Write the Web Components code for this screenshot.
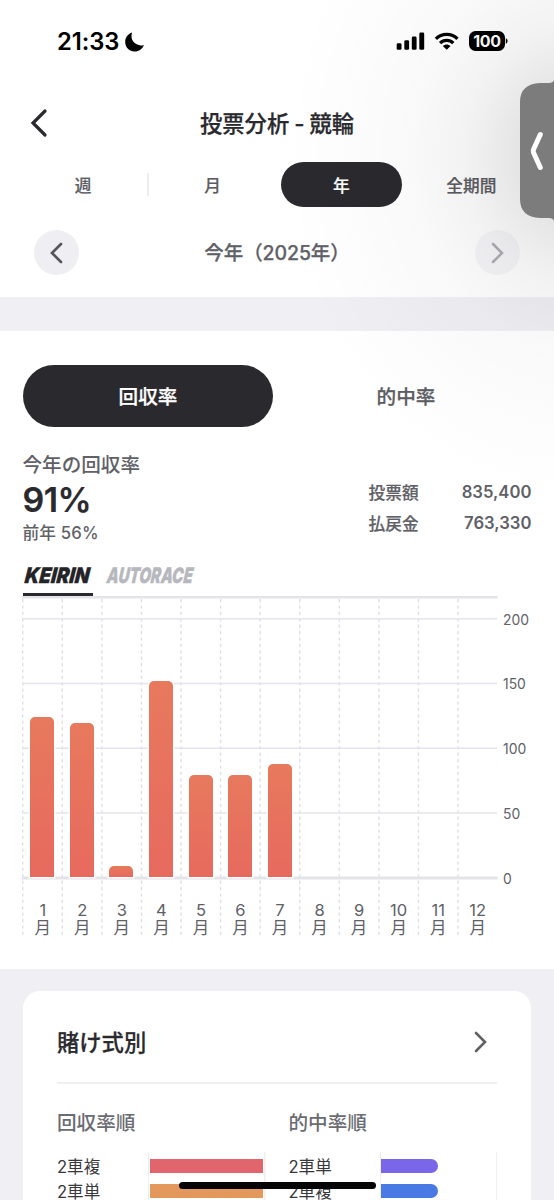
<!DOCTYPE html>
<html lang="ja">
<head>
<meta charset="utf-8">
<title>投票分析</title>
<style>
html,body{margin:0;padding:0;background:#fff}
body{width:554px;height:1200px;overflow:hidden;font-family:Inter,"Noto Sans CJK JP",sans-serif;color:#2a2a2e;-webkit-font-smoothing:antialiased}
</style>
</head>
<body>
<analysis-screen></analysis-screen>
<script>
const define=(name,html)=>customElements.define(name,class extends HTMLElement{
  connectedCallback(){
    if(this.shadowRoot)return;
    const t=document.createElement('template');
    t.innerHTML=typeof html==='function'?html(this):html;
    this.attachShadow({mode:'open'}).appendChild(t.content.cloneNode(true));
  }
});

define('status-bar',`<style>
:host{display:flex;box-sizing:border-box;height:82px;padding:0 46px 0 57px;align-items:center;color:#000}
.time{font-size:23.800px;font-weight:600;letter-spacing:-.1px;line-height:30px;width:67px;white-space:nowrap;padding-top:1px}
.moon{margin-top:1px}
.right{margin-left:auto;display:flex;align-items:center}
.bat{display:flex;align-items:center;justify-content:center;width:36px;height:20px;border-radius:6.5px;background:#000;color:#fff;font-size:16px;font-weight:700;letter-spacing:-.3px;line-height:20px}
</style>
<span class="time">21:33</span>
<svg class="moon" width="21" height="20" viewBox="0 0 21 20"><path d="M8 .6C4 2 1.200 5.500 1.200 9.900C1.200 15.300 5.400 19.400 10.700 19.400C15 19.400 18.500 16.900 19.900 12.900C13.500 15.200 5.300 9.500 8 .6Z"/></svg>
<div class="right">
<svg width="29" height="20" viewBox="0 0 29 20"><rect x=".7" y="12.300" width="4.800" height="6.500" rx="1.300"/><rect x="8.300" y="9.300" width="4.800" height="9.500" rx="1.300"/><rect x="15.800" y="5.600" width="4.800" height="13.200" rx="1.300"/><rect x="23.300" y="1.600" width="4.900" height="17.200" rx="1.300"/></svg>
<svg style="margin:0 10px 0 9px" width="25" height="20" viewBox="0 0 25 20"><g fill="none" stroke="#000" stroke-width="3.200"><path d="M1.900 7.900C7.700 1.900 17.700 1.900 23.500 7.900"/><path d="M6.100 12.100C9.700 8.400 15.700 8.400 19.300 12.100"/></g><path d="M8.800 15C11 12.900 14.400 12.900 16.600 15L12.700 18.800Z"/></svg>
<div class="bat">100</div>
<svg width="3" height="8" viewBox="0 0 3 8"><path d="M.8 1Q4.500 4 .8 7Z"/></svg>
</div>`);

define('ui-chevron',el=>{
  const s=+el.getAttribute('size'),w=el.getAttribute('weight'),d=el.getAttribute('dir');
  return `<style>:host{display:block;line-height:0}</style><svg width="${s/2+6}" height="${s+6}" fill="none" stroke="currentColor" stroke-width="${w}" stroke-linecap="round"><path d="${d==='left'?`M${s/2+3} 3L3 ${s/2+3}L${s/2+3} ${s+3}`:`M3 3L${s/2+3} ${s/2+3}L3 ${s+3}`}"/></svg>`});

define('nav-bar',`<style>
:host{display:grid;grid-template-columns:84px 1fr 84px;height:80px;align-items:center;color:#2a2a2e}
ui-chevron{margin-left:30px;margin-top:1px}
.t{text-align:center;font-size:22.3px;font-weight:500;-webkit-text-stroke:.25px;line-height:32px;padding-top:3px;white-space:nowrap;word-spacing:-1px}
</style><ui-chevron dir="left" size="24" weight="3.2"></ui-chevron><div class="t"><slot></slot></div>`);

define('period-tabs',`<style>
:host{display:grid;grid-template-columns:repeat(4,1fr);height:45px;padding:0 18px 0 18.500px}
div{display:flex;align-items:center;justify-content:center;font-size:16.700px;font-weight:500;-webkit-text-stroke:.2px;color:#5c5d63;margin:0 4px;border-radius:23px;position:relative}
.sep::after{content:"";position:absolute;right:-5px;top:11px;width:2px;height:23px;background:#ededf0}
.on{background:#2a2a2e;color:#fff;margin-right:5px}
</style><div class="sep">週</div><div>月</div><div class="on">年</div><div>全期間</div>`);

define('round-button',`<style>
:host{display:flex;width:45px;height:45px;border-radius:50%;background:#efeff3;align-items:center;justify-content:center;color:#55565b}
:host([disabled]){color:#adaeb2;background:#f6f6f9}
</style><slot></slot>`);

define('period-picker',`<style>
:host{display:flex;height:45px;margin:23px 34px 22px;align-items:center;justify-content:space-between}
.t{font-size:19.500px;font-weight:500;-webkit-text-stroke:.25px;color:#606167;line-height:30px;white-space:nowrap;letter-spacing:-.1px;padding-top:1px}
</style><round-button><ui-chevron dir="left" size="18" weight="2.7"></ui-chevron></round-button><div class="t"><slot></slot></div><round-button disabled><ui-chevron dir="right" size="18" weight="2.5"></ui-chevron></round-button>`);

define('rate-switch',`<style>
:host{display:grid;grid-template-columns:250px 1fr;column-gap:8px;height:62px;margin:34px 23px 0 23px}
div{display:flex;align-items:center;justify-content:center;border-radius:31px;font-size:19.600px;font-weight:500;-webkit-text-stroke:.25px;color:#5c5d63;box-sizing:border-box;padding-bottom:1px}
.on{background:#2a2a2e;color:#fff}
</style><div class="on">回収率</div><div>的中率</div>`);

define('rate-summary',`<style>
:host{display:flex;justify-content:space-between;margin:24px 22.500px 0 22.500px;height:100px;color:#606167;white-space:nowrap}
.a{font-size:19.600px;line-height:28px;font-weight:500}
.b{font-size:34px;line-height:42px;font-weight:600;color:#2a2a2e;letter-spacing:-.6px;-webkit-text-stroke:.2px}
.c{font-size:16.700px;line-height:24px;font-weight:500;letter-spacing:.15px}
dl{margin:26px 0 0;display:grid;grid-template-columns:auto auto;column-gap:43px;grid-auto-rows:31px;align-content:start}
dt,dd{margin:0;line-height:31px;font-weight:600;font-size:16.700px}
dt{font-weight:500;-webkit-text-stroke:.2px;padding-top:1px}
dd{text-align:right}
</style><div><div class="a">今年の回収率</div><div class="b">91%</div><div class="c">前年 56%</div></div>
<dl><dt>投票額</dt><dd>835,400</dd><dt>払戻金</dt><dd>763,330</dd></dl>`);

define('brand-tab',el=>`<style>
:host{display:block;box-sizing:border-box;height:35px;color:#b7b8be;border-bottom:3px solid transparent}
:host([active]){color:#242428;border-color:#2a2a2e}
svg{display:block;overflow:visible}
text{font:italic 900 21.300px Inter,sans-serif;stroke:currentColor;stroke-width:.3px}
</style><svg width="${+el.getAttribute('w')+5}" height="32"><text x="1" y="22.300" transform="translate(2.600 0) skewX(-6)" fill="currentColor" textLength="${+el.getAttribute('w')-1}" lengthAdjust="spacingAndGlyphs">${el.getAttribute('label')}</text></svg>`);

define('brand-tabs',`<style>:host{display:flex;gap:12px;height:35px;margin:10px 0 0 22.500px}</style>
<brand-tab active w="65.500" label="KEIRIN"></brand-tab><brand-tab w="87" label="AUTORACE"></brand-tab>`);

define('month-chart',()=>{
  const heights=[160.5,154,11.500,196.500,102,102,113.500,0,0,0,0,0];
  let g='';
  for(let i=0;i<12;i++)g+=`<path d="M${.7+i*39.58} 3V339" stroke="#dfdfe5" stroke-width="1.400" stroke-dasharray="3.200 3.200"/>`;
  [22.7,87.5,152.3,217].forEach(y=>g+=`<path d="M0 ${y}H475" stroke="#e4e4eb" stroke-width="1.600"/>`);
  return `<style>
:host{display:grid;grid-template-columns:475.500px 1fr;margin:0 0 0 22px;height:372.500px}
.plot{display:grid;grid-template:281px 1fr/100%;height:340px}
svg{grid-area:1/1/3/2}
.bars{grid-area:1/1;display:grid;grid-template-columns:repeat(12,1fr);align-items:end;justify-items:center;padding-left:.5px}
.bars i{width:24px;border-radius:5px 5px 0 0;background:linear-gradient(#e7795d,#e76a5e);box-shadow:0 0 0 1.500px #fff}
.bars i.z{visibility:hidden}
.m{grid-area:2/1;display:grid;grid-template-columns:repeat(12,1fr);text-align:center;font-size:16.500px;line-height:18px;color:#606167;padding:23.500px 0 0 1px}
.m span{display:block}
.axis{display:flex;flex-direction:column;padding:13.500px 0 0 5.500px;font-size:13.900px;line-height:20px;gap:44.800px;color:#606167}
</style>
<div class="plot"><svg width="476" height="340">${g}<path d="M0 1H475.500M0 282H475.500" stroke="#e3e3e8" stroke-width="2.800"/></svg>
<div class="bars">${heights.map(v=>`<i class="${v?'':'z'}" style="height:${v}px"></i>`).join('')}</div>
<div class="m">${heights.map((_,i)=>`<div><span>${i+1}</span><span>月</span></div>`).join('')}</div></div>
<div class="axis"><span>200</span><span>150</span><span>100</span><span>50</span><span>0</span></div>`});

define('rank-row',el=>`<style>
:host{display:grid;grid-template-columns:92.500px 1fr;height:25px;align-items:center;font-size:16.600px;line-height:22px;color:#38383c;white-space:nowrap}
span{padding-top:2px}
i{display:block;height:14px;width:${el.getAttribute('w')}px;background:${el.getAttribute('color')};border-radius:${el.getAttribute('r')||0}}
</style><span><slot></slot></span><i></i>`);

define('rank-list',el=>`<style>
:host{display:block}
h3{margin:0 0 14px;font-size:19.600px;line-height:30px;font-weight:500;color:#6b6c71}
.r{background:linear-gradient(#efeff2,#efeff2) 91px 0/1px 100% no-repeat,linear-gradient(#efeff2,#efeff2) 207px 0/1.500px 100% no-repeat;height:60px;padding-top:2px}
</style><h3>${el.getAttribute('heading')}</h3><div class="r"><slot></slot></div>`);

define('bet-card',`<style>
:host{display:block;box-sizing:border-box;background:#fff;border-radius:17px;margin:22.500px 23px 0;padding:0 34px;height:300px}
.head{display:flex;align-items:center;justify-content:space-between;padding-top:5px;height:85.500px;border-bottom:2px solid #f0f0f2;font-size:22.300px;font-weight:500;color:#2a2a2e;margin-bottom:24px}
.head span{margin-top:5px;-webkit-text-stroke:.25px}.head ui-chevron{margin:6px 9px 0 0;color:#606165}
.cols{display:grid;grid-template-columns:231.500px 1fr}
</style><div class="head"><span>賭け式別</span><ui-chevron dir="right" size="18" weight="2.6"></ui-chevron></div>
<div class="cols">
<rank-list heading="回収率順"><rank-row w="113.500" color="#e1656c">2車複</rank-row><rank-row w="113.500" color="#e5985b">2車単</rank-row></rank-list>
<rank-list heading="的中率順"><rank-row w="57" r="0 7px 7px 0" color="#7a66e8">2車単</rank-row><rank-row w="57" r="0 7px 7px 0" color="#4979e3">2車複</rank-row></rank-list>
</div>`);

define('edge-handle',`<style>
:host{position:absolute;left:520px;top:80px;width:34px;height:141px;display:block}
svg{display:block}
</style><svg width="34" height="141" viewBox="0 0 34 141"><path d="M34 0Q33 3 29 3H20Q0 4 0 22V119Q0 137 20 138H29Q33 138 34 141Z" fill="#7c7c7c"/><path d="M20.300 54.500L13.500 69.500Q13 71 13.500 72.500L20.300 87.500" fill="none" stroke="#fff" stroke-width="5" stroke-linecap="round" stroke-linejoin="round"/></svg>`);

define('analysis-screen',`<style>
:host{display:block;position:relative;width:554px;height:1200px;overflow:hidden;background:#fff}
.band{height:34px;background:#efeff4}
.shade{position:absolute;left:254px;top:0;width:300px;height:500px;background:radial-gradient(ellipse 290px 345px at 320px 155px,rgba(0,0,0,.16),rgba(0,0,0,.1) 20%,rgba(0,0,0,.05) 37%,rgba(0,0,0,.025) 56%,rgba(0,0,0,.01) 78%,transparent)}
.low{background:#efeff4;overflow:hidden;height:240px}
.home{position:absolute;left:179px;top:1182px;width:197px;height:7px;border-radius:4px;background:#050505}
</style>
<status-bar></status-bar><nav-bar>投票分析 - 競輪</nav-bar><period-tabs></period-tabs>
<period-picker>今年（2025年）</period-picker>
<div class="band"></div>
<rate-switch></rate-switch><rate-summary></rate-summary><brand-tabs></brand-tabs><month-chart></month-chart>
<div class="low"><bet-card></bet-card></div>
<div class="shade"></div><edge-handle></edge-handle><div class="home"></div>`);
</script>
</body>
</html>
